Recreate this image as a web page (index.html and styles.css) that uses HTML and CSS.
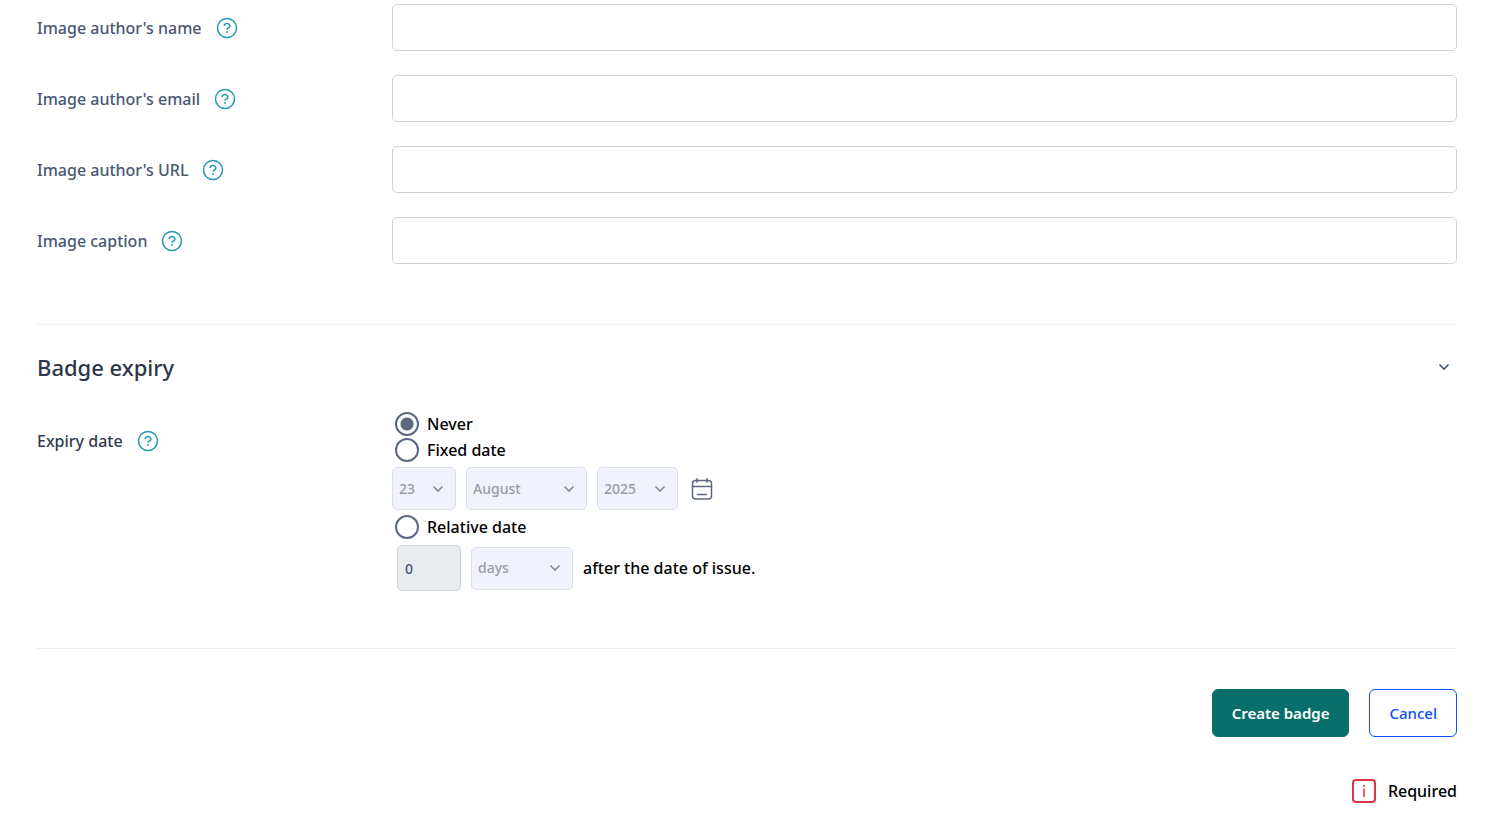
FILE: index.html
```html
<!DOCTYPE html>
<html lang="en">
<head>
    <meta charset="UTF-8">
    <meta name="viewport" content="width=device-width, initial-scale=1.0">
    <title>Create badge</title>
    <link rel="stylesheet" href="styles.css">
</head>
<body>
    <svg class="sprite" aria-hidden="true">
        <symbol id="icon-help" viewBox="0 0 22 22">
            <circle cx="11" cy="11" r="9.5" fill="none" stroke="currentColor" stroke-width="1.5"/>
            <path d="M8.2 9a2.8 2.5 0 1 1 4.2 2.1c-1 .6-1.4 1-1.4 1.7" fill="none" stroke="currentColor" stroke-width="1.5"/>
            <circle cx="11" cy="15" r="0.9" fill="currentColor"/>
        </symbol>
        <symbol id="icon-chevron" viewBox="0 0 12 12">
            <path d="M1.5 3.5L6 8l4.5-4.5" fill="none" stroke="currentColor" stroke-width="1.6"/>
        </symbol>
    </svg>
    <form class="badge-form">
        <section class="fields">
            <div class="row">
                <div class="row-label">
                    <label for="authorName">Image author's name</label>
                    <button type="button" class="help" aria-label="Help"><svg><use href="#icon-help"/></svg></button>
                </div>
                <input type="text" id="authorName" class="text-input">
            </div>
            <div class="row">
                <div class="row-label">
                    <label for="authorEmail">Image author's email</label>
                    <button type="button" class="help" aria-label="Help"><svg><use href="#icon-help"/></svg></button>
                </div>
                <input type="text" id="authorEmail" class="text-input">
            </div>
            <div class="row">
                <div class="row-label">
                    <label for="authorUrl">Image author's URL</label>
                    <button type="button" class="help" aria-label="Help"><svg><use href="#icon-help"/></svg></button>
                </div>
                <input type="text" id="authorUrl" class="text-input">
            </div>
            <div class="row">
                <div class="row-label">
                    <label for="caption">Image caption</label>
                    <button type="button" class="help" aria-label="Help"><svg><use href="#icon-help"/></svg></button>
                </div>
                <input type="text" id="caption" class="text-input">
            </div>
        </section>

        <section class="expiry">
            <div class="section-header">
                <h2>Badge expiry</h2>
                <button type="button" class="toggle" aria-label="Collapse"><svg><use href="#icon-chevron"/></svg></button>
            </div>
            <div class="row row-expiry">
                <div class="row-label dark">
                    <span id="expiryLabel">Expiry date</span>
                    <button type="button" class="help" aria-label="Help"><svg><use href="#icon-help"/></svg></button>
                </div>
                <div class="options" role="radiogroup" aria-labelledby="expiryLabel">
                    <label class="radio"><input type="radio" name="expiry" checked>Never</label>
                    <label class="radio"><input type="radio" name="expiry">Fixed date</label>
                    <div class="date-selects">
                        <select class="day" aria-label="Day" disabled><option>23</option></select>
                        <select class="month" aria-label="Month" disabled><option>August</option></select>
                        <select class="year" aria-label="Year" disabled><option>2025</option></select>
                        <button type="button" class="calendar" aria-label="Calendar">
                            <svg viewBox="0 0 22 22" fill="none" stroke="currentColor" stroke-width="1.5" stroke-linecap="round">
                                <rect x="1.5" y="2.5" width="19" height="18.5" rx="3"/>
                                <path d="M1.5 8.5h19M6 .8v3.5M16 .8v3.5M6.5 16.5h9"/>
                            </svg>
                        </button>
                    </div>
                    <label class="radio"><input type="radio" name="expiry">Relative date</label>
                    <div class="relative-date">
                        <input type="text" class="amount" value="0" aria-label="Amount" disabled>
                        <select class="unit" aria-label="Unit" disabled><option>days</option></select>
                        <span>after the date of issue.</span>
                    </div>
                </div>
            </div>
        </section>

        <div class="actions">
            <button type="submit" class="btn btn-primary">Create badge</button>
            <button type="button" class="btn btn-outline">Cancel</button>
        </div>
        <div class="required">
            <svg viewBox="0 0 24 24" fill="none" stroke="currentColor">
                <rect x="1" y="1" width="22" height="22" rx="3" stroke-width="2"/>
                <path d="M12 9.5v8.5M12 6v2" stroke-width="1.5"/>
            </svg>
            <span>Required</span>
        </div>
    </form>
</body>
</html>
```
FILE: styles.css
```css
* {
    box-sizing: border-box;
}

body {
    margin: 0;
    background: #fff;
    color: #000;
    font-family: 'Segoe UI', 'Noto Sans', sans-serif;
    font-size: 16px;
    font-weight: 500;
    line-height: 24px;
}

button, input, select {
    font: inherit;
}

button {
    cursor: pointer;
}

h2 {
    margin: 0;
    color: #2d3748;
    font-size: 22px;
    font-weight: 500;
    line-height: 32px;
}

.sprite {
    display: none;
}

.badge-form {
    padding: 4px 36px 0 37px;
}

.fields {
    display: grid;
    gap: 24px;
    padding-bottom: 60px;
}

.row {
    display: grid;
    grid-template-columns: 1fr 3fr;
    align-items: center;
}

.row-label {
    display: flex;
    align-items: center;
    gap: 14px;
    color: #4a5872;
}

.row-label.dark {
    color: #333c50;
}

.help, .toggle, .calendar {
    display: flex;
    padding: 0;
    border: 0;
    background: none;
}

.help {
    color: #2498b3;
}

.help svg {
    width: 22px;
    height: 22px;
}

.text-input {
    width: 100%;
    height: 47px;
    padding: 0 8px;
    border: 1px solid #ced1da;
    border-radius: 5px;
    background: #fff;
}

.expiry {
    padding: 26px 0 57px;
    border-top: 1px solid #eaeef5;
    border-bottom: 1px solid #eaeef5;
}

.section-header {
    display: flex;
    align-items: center;
    justify-content: space-between;
    padding-right: 7px;
}

.toggle {
    color: #44546c;
}

.toggle svg {
    width: 12px;
    height: 12px;
}

.row-expiry {
    align-items: start;
    padding-top: 28px;
}

.row-expiry .row-label {
    padding-top: 18px;
}

.radio {
    display: flex;
    align-items: center;
    gap: 8px;
    width: fit-content;
    height: 26px;
    padding-left: 3px;
}

.radio input {
    appearance: none;
    width: 24px;
    height: 24px;
    margin: 0;
    border: 2px solid #5d6880;
    border-radius: 50%;
    background: #fff;
}

.radio input:checked {
    background: radial-gradient(circle, #5d6880 6px, #fff 7px);
}

.date-selects, .relative-date {
    display: flex;
    align-items: center;
    gap: 10px;
}

.date-selects {
    padding: 4px 0;
}

.relative-date {
    padding: 5px 0 0 5px;
}

select {
    appearance: none;
    height: 43px;
    padding: 0 6px;
    border: 1px solid #dbe0e8;
    border-radius: 5px;
    background: #f0f3fc url("data:image/svg+xml,%3Csvg xmlns='http://www.w3.org/2000/svg' width='12' height='12'%3E%3Cpath d='M1.5 3.5L6 8l4.5-4.5' fill='none' stroke='%23808a9c' stroke-width='1.6'/%3E%3C/svg%3E") no-repeat right 11px center;
    color: #969ba5;
    font-size: 14px;
    opacity: 1;
}

.day {
    width: 64px;
}

.month {
    width: 121px;
}

.year {
    width: 81px;
}

.unit {
    width: 102px;
}

.calendar {
    margin-left: 3px;
    color: #5d6880;
}

.calendar svg {
    width: 22px;
    height: 22px;
}

.amount {
    width: 64px;
    height: 46px;
    padding: 0 7px;
    border: 1px solid #ced1da;
    border-radius: 5px;
    background: #e9ecef;
    color: #4a5872;
    font-size: 14px;
}

.actions {
    display: flex;
    justify-content: flex-end;
    gap: 20px;
    padding-top: 40px;
}

.btn {
    height: 48px;
    padding: 0 19px;
    border: 1px solid;
    border-radius: 6px;
    font-size: 15px;
}

.btn-primary {
    border-color: #096f6b;
    background: #096f6b;
    color: #fff;
    font-weight: 600;
}

.btn-outline {
    border-color: #0f4fff;
    background: #fff;
    color: #0f4fff;
}

.required {
    display: flex;
    align-items: center;
    justify-content: flex-end;
    gap: 12px;
    padding-top: 42px;
}

.required svg {
    width: 24px;
    height: 24px;
    color: #dc3545;
}
```
